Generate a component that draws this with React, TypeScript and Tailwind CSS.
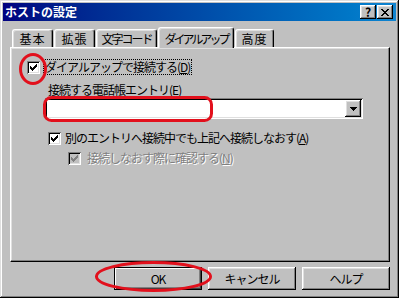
const CHECK = ["......X", ".....XX", "X...XXX", "XX.XXX.", "XXXXX..", ".XXX...", "..X...."];
const CLOSE = ["XX....XX", ".XX..XX.", "..XXXX..", "...XX...", "..XXXX..", ".XX..XX.", "XX....XX"];

const FONT = "font-['Noto_Sans_CJK_JP',sans-serif]";
const RAISED = "shadow-[inset_-1px_-1px_#000,inset_1px_1px_#fff,inset_-2px_-2px_#808080,inset_2px_2px_#dfdfdf]";
const SUNKEN = "shadow-[inset_1px_1px_#808080,inset_-1px_-1px_#fff,inset_2px_2px_#000,inset_-2px_-2px_#dfdfdf]";

function Pixels({ rows, color, x, y }: { rows: string[]; color: string; x: number; y: number }) {
    return (
        <>
            {rows.flatMap((row, j) =>
                row.split("").map((c, i) =>
                    c === "X" ? <rect key={`${i}-${j}`} x={x + i} y={y + j} width={1} height={1} fill={color} /> : null,
                ),
            )}
        </>
    );
}

function CheckBox({ disabled = false }: { disabled?: boolean }) {
    return (
        <span className={`block h-[13px] w-[13px] shrink-0 ${SUNKEN} ${disabled ? "bg-[#c0c0c0]" : "bg-white"}`}>
            <svg width="13" height="13" viewBox="0 0 13 13" shapeRendering="crispEdges">
                <Pixels rows={CHECK} color={disabled ? "#808080" : "#000"} x={3} y={3} />
            </svg>
        </span>
    );
}

function Tab({ label, width, tracking, active = false }: { label: string; width: number; tracking: string; active?: boolean }) {
    return (
        <div
            className={`flex items-center justify-center whitespace-nowrap rounded-t-[3px] border-l border-t border-r border-l-white border-t-white border-r-black bg-[#c0c0c0] shadow-[inset_-1px_0_#808080,inset_1px_1px_#dfdfdf] ${
                active ? "relative z-10 -mb-[1px] h-[21px]" : "h-[18px]"
            }`}
            style={{ width }}
        >
            <span className={`pt-[1px] ${tracking}`}>{label}</span>
        </div>
    );
}

function Button({ label, isDefault = false }: { label: string; isDefault?: boolean }) {
    return (
        <button
            className={`flex h-[23px] w-[88px] items-center justify-center bg-[#c0c0c0] text-[12px] tracking-[-1px] text-black ${
                isDefault
                    ? "border border-black shadow-[inset_1px_1px_#fff,inset_-1px_-1px_#404040,inset_-2px_-2px_#808080]"
                    : RAISED
            }`}
            type="button"
        >
            {label}
        </button>
    );
}

export default function App() {
    return (
        <div
            className={`relative h-[298px] w-[399px] overflow-hidden bg-[#c0c0c0] p-[3px] text-[12px] leading-none text-black ${FONT} shadow-[inset_-1px_-1px_#000,inset_1px_1px_#dfdfdf,inset_-2px_-2px_#808080,inset_2px_2px_#fff]`}
        >
            <div className="flex h-[18px] items-center justify-between bg-gradient-to-r from-[#000080] to-[#1084d0] pl-[2px] pr-[3px]">
                <span className="text-[12px] font-bold text-white">ホストの設定</span>
                <div className="flex gap-[1px]">
                    <span className={`flex h-[14px] w-[16px] items-center justify-center bg-[#c0c0c0] text-[12px] font-bold ${RAISED}`}>
                        ?
                    </span>
                    <span className={`flex h-[14px] w-[16px] items-center justify-center bg-[#c0c0c0] ${RAISED}`}>
                        <svg width="8" height="7" viewBox="0 0 8 7" shapeRendering="crispEdges">
                            <Pixels rows={CLOSE} color="#000" x={0} y={0} />
                        </svg>
                    </span>
                </div>
            </div>

            <div className="ml-[7px] mt-[6px] w-[380px]">
                <div className="flex h-[20px] items-end gap-[1px] pl-[2px]">
                    <Tab label="基本" width={41} tracking="tracking-[1px]" />
                    <Tab label="拡張" width={41} tracking="tracking-[1px]" />
                    <Tab label="文字コード" width={61} tracking="tracking-[-2px]" />
                    <Tab label="ダイアルアップ" width={76} tracking="tracking-[-3px]" active />
                    <Tab label="高度" width={39} tracking="tracking-[1px]" />
                </div>

                <div className="h-[215px] whitespace-nowrap border border-b-black border-l-white border-r-black border-t-white tracking-[-1px] shadow-[inset_-1px_-1px_#808080,inset_1px_1px_#dfdfdf]">
                    <div className="ml-[16px] mt-[10px] flex h-[18px] items-center gap-[3px]">
                        <CheckBox />
                        <span className="border border-dotted border-black px-[1px] py-[1px]">
                            ダイアルアップで接続する(<span className="underline">D</span>)
                        </span>
                    </div>

                    <div className="ml-[37px] mt-[6px] h-[15px] leading-[15px]">
                        接続する電話帳エントリ(<span className="underline">E</span>)
                    </div>

                    <div className={`relative ml-[34px] mt-[1px] h-[21px] w-[318px] bg-white ${SUNKEN}`}>
                        <div className={`absolute right-[2px] top-[2px] flex h-[17px] w-[16px] items-center justify-center bg-[#c0c0c0] ${RAISED}`}>
                            <svg width="7" height="4" viewBox="0 0 7 4" shapeRendering="crispEdges">
                                <path d="M0 0h7v1h-1v1h-1v1h-1v1h-1v-1h-1v-1h-1v-1h-1z" fill="#000" />
                            </svg>
                        </div>
                    </div>

                    <div className="ml-[37px] mt-[11px] flex h-[16px] items-center gap-[4px]">
                        <CheckBox />
                        <span>
                            別のエントリへ接続中でも上記へ接続しなおす(<span className="underline">A</span>)
                        </span>
                    </div>

                    <div className="ml-[57px] mt-[4px] flex h-[16px] items-center gap-[6px]">
                        <CheckBox disabled />
                        <span className="text-[#808080] [text-shadow:1px_1px_0_#fff]">
                            接続しなおす際に確認する(<span className="underline">N</span>)
                        </span>
                    </div>
                </div>

                <div className="mt-[5px] flex justify-end gap-[6px]">
                    <Button label="OK" isDefault />
                    <Button label="キャンセル" />
                    <Button label="ヘルプ" />
                </div>
            </div>

            <svg className="pointer-events-none absolute left-0 top-0" width="399" height="298" viewBox="0 0 399 298">
                <ellipse cx="33" cy="69" rx="12.5" ry="14.5" fill="none" stroke="#e2101c" strokeWidth="3" />
                <rect x="44.5" y="97.5" width="167" height="23" rx="7" fill="none" stroke="#e2101c" strokeWidth="3" />
                <ellipse cx="153.5" cy="276.5" rx="57" ry="14" fill="none" stroke="#e2101c" strokeWidth="3" />
            </svg>
        </div>
    );
}
